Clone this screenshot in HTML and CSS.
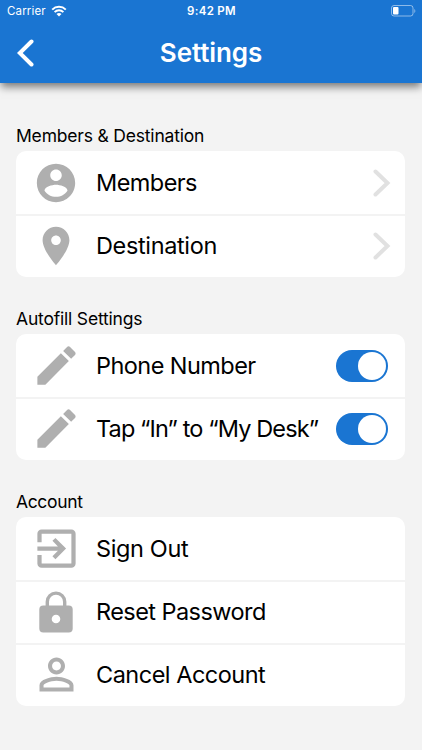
FILE: index.html
```html
<!DOCTYPE html>
<html lang="en">
<head>
  <meta charset="UTF-8">
  <title>Settings</title>
  <meta name="viewport" content="width=device-width, initial-scale=1.0">
  <link rel="stylesheet" href="styles.css">
</head>
<body>

<header class="header">
  <!-- Status bar -->
  <div class="status-bar">
    <div class="carrier">
      <span>Carrier</span>
      <svg class="wifi" viewBox="0 0 16 12">
        <path d="M1.2 4.6C5 .9 11 .9 14.8 4.6M3.6 7.1c2.5-2.4 6.3-2.4 8.8 0" fill="none" stroke="#fff" stroke-width="2"/>
        <path d="M8 11.6L5.5 9c1.4-1.3 3.6-1.3 5 0z" fill="#fff"/>
      </svg>
    </div>
    <div class="time">9:42 PM</div>
    <svg class="battery" viewBox="0 0 25 12">
      <rect x=".5" y=".5" width="21.5" height="10.5" rx="2.5" fill="none" stroke="#fff" stroke-opacity=".5"/>
      <rect x="2" y="2" width="5.5" height="7.5" rx="1" fill="#fff"/>
      <path d="M23.3 4v4c1.4-.6 1.4-3.400 0-4z" fill="#fff" fill-opacity=".5"/>
    </svg>
  </div>

  <div class="nav-bar">
    <svg class="back" viewBox="0 0 18 28">
      <path d="M14.500 2.500L2.800 14l11.700 11.500" fill="none" stroke="#fff" stroke-width="4" stroke-linecap="round"/>
    </svg>
    <h1>Settings</h1>
  </div>
</header>

<main class="content">
  <section>
    <h2>Members &amp; Destination</h2>
    <div class="card">
      <div class="row">
        <svg class="icon" viewBox="0 0 24 24"><path d="M12 2C6.480 2 2 6.480 2 12s4.480 10 10 10 10-4.480 10-10S17.520 2 12 2zm0 3c1.660 0 3 1.340 3 3s-1.340 3-3 3-3-1.340-3-3 1.340-3 3-3zm0 14.200c-2.500 0-4.710-1.280-6-3.220.030-1.990 4-3.080 6-3.080 1.990 0 5.970 1.090 6 3.080-1.290 1.940-3.500 3.220-6 3.220z"/></svg>
        <span class="name members">Members</span>
        <svg class="chevron" viewBox="0 0 18 28"><path d="M2.500 2.500L14.500 14l-12 11.500"/></svg>
      </div>
      <div class="row">
        <svg class="icon" viewBox="0 0 24 24"><path d="M12 2C8.130 2 5 5.130 5 9c0 5.250 7 13 7 13s7-7.750 7-13c0-3.870-3.130-7-7-7zm0 9.500c-1.380 0-2.500-1.120-2.500-2.500s1.120-2.500 2.500-2.500 2.500 1.120 2.500 2.500-1.120 2.500-2.500 2.500z"/></svg>
        <span class="name destination">Destination</span>
        <svg class="chevron" viewBox="0 0 18 28"><path d="M2.500 2.500L14.500 14l-12 11.500"/></svg>
      </div>
    </div>
  </section>

  <section>
    <h2>Autofill Settings</h2>
    <div class="card">
      <div class="row">
        <svg class="icon large" viewBox="0 0 24 24"><path d="M3 17.250V21h3.750L17.810 9.940l-3.750-3.750L3 17.250zM20.710 7.040c.390-.390.390-1.020 0-1.410l-2.340-2.340c-.390-.390-1.020-.390-1.410 0l-1.830 1.830 3.750 3.750 1.830-1.830z"/></svg>
        <span class="name">Phone Number</span>
        <span class="toggle"></span>
      </div>
      <div class="row">
        <svg class="icon large" viewBox="0 0 24 24"><path d="M3 17.250V21h3.750L17.810 9.940l-3.750-3.750L3 17.250zM20.710 7.040c.390-.390.390-1.020 0-1.410l-2.340-2.340c-.390-.390-1.020-.390-1.410 0l-1.830 1.830 3.750 3.750 1.830-1.830z"/></svg>
        <span class="name desk">Tap “In” to “My Desk”</span>
        <span class="toggle"></span>
      </div>
    </div>
  </section>

  <section>
    <h2 class="account">Account</h2>
    <div class="card">
      <div class="row">
        <svg class="icon large" viewBox="0 0 24 24"><path d="M10.090 15.590L11.500 17l5-5-5-5-1.410 1.410L12.670 11H3v2h9.670l-2.580 2.590zM19 3H5c-1.110 0-2 .900-2 2v4h2V5h14v14H5v-4H3v4c0 1.100.890 2 2 2h14c1.100 0 2-.900 2-2V5c0-1.100-.900-2-2-2z"/></svg>
        <span class="name signout">Sign Out</span>
      </div>
      <div class="row">
        <svg class="icon" viewBox="0 0 46 46">
          <path d="M14.300 18v-5.200a8.700 8.700 0 0 1 17.400 0V18" fill="none" stroke="#afafaf" stroke-width="3.400"/>
          <path fill-rule="evenodd" d="M10.300 16.500h25.400a4 4 0 0 1 4 4v19a4 4 0 0 1-4 4H10.300a4 4 0 0 1-4-4v-19a4 4 0 0 1 4-4zM23 25.700a4.300 4.300 0 1 0 0 8.600 4.300 4.300 0 0 0 0-8.600z"/>
        </svg>
        <span class="name">Reset Password</span>
      </div>
      <div class="row">
        <svg class="icon large" viewBox="0 0 24 24"><path d="M12 5.900c1.160 0 2.100.940 2.100 2.100s-.940 2.100-2.100 2.100S9.900 9.160 9.900 8s.940-2.100 2.100-2.100m0 9c2.970 0 6.100 1.460 6.100 2.100v1.100H5.900V17c0-.640 3.130-2.100 6.100-2.100M12 4C9.790 4 8 5.790 8 8s1.790 4 4 4 4-1.790 4-4-1.790-4-4-4zm0 9c-2.670 0-8 1.340-8 4v3h16v-3c0-2.660-5.330-4-8-4z"/></svg>
        <span class="name cancel">Cancel Account</span>
      </div>
    </div>
  </section>
</main>

</body>
</html>
```
FILE: styles.css
```css
* { box-sizing: border-box; margin: 0; padding: 0; }

body {
  font-family: Inter, "Liberation Sans", sans-serif;
  background: #f3f3f3;
  color: #000;
  min-height: 100vh;
  overflow: hidden;
}

svg {
  display: block;
  flex: none;
}

/* Header */
.header {
  height: 83px;
  background: #1a75d2;
  color: #fff;
  box-shadow: 0 5px 8px -1px rgba(0, 0, 0, 0.5);
}

.status-bar {
  display: grid;
  grid-template-columns: 1fr auto 1fr;
  align-items: center;
  height: 22px;
  padding: 0 6px 0 7px;
  font-size: 11.5px;
}

.carrier {
  display: flex;
  align-items: center;
  gap: 5px;
  letter-spacing: 0.15px;
}

.wifi {
  width: 16px;
  height: 12px;
}

.time {
  font-weight: 600;
  letter-spacing: 0.3px;
}

.battery {
  width: 25px;
  height: 12px;
  justify-self: end;
}

.nav-bar {
  display: grid;
  grid-template-columns: 60px 1fr 60px;
  align-items: center;
  height: 61px;
}

.back {
  width: 18px;
  height: 28px;
  margin-left: 17px;
}

h1 {
  font-size: 26px;
  font-weight: 600;
  line-height: 32px;
  letter-spacing: -0.1px;
  text-align: center;
}

/* Groups */
.content {
  padding: 42px 17px 0 16px;
}

section {
  margin-bottom: 31px;
}

h2 {
  height: 26px;
  font-size: 17.5px;
  font-weight: 400;
  line-height: 22px;
  letter-spacing: -0.19px;
  white-space: nowrap;
}

h2.account {
  letter-spacing: -0.35px;
}

.card {
  background: #fff;
  border-radius: 10px;
}

.row {
  display: flex;
  align-items: center;
  height: 63px;
  padding: 0 14.5px 0 17px;
}

/* Divider drawn inside the row, so it doesn't push the content down */
.row + .row {
  box-shadow: inset 0 2px #f3f3f3;
}

.icon {
  width: 46px;
  height: 46px;
  fill: #afafaf;
}

.icon.large {
  width: 51px;
  height: 51px;
  margin: 0 -2.5px;
}

.name {
  flex: 1;
  min-width: 0;
  margin-left: 17px;
  font-size: 23.5px;
  line-height: 30px;
  letter-spacing: -0.56px;
  white-space: nowrap;
}

.name.destination,
.name.signout {
  letter-spacing: -0.36px;
}

.name.cancel {
  letter-spacing: -0.5px;
}

.name.desk {
  letter-spacing: -0.88px;
}

.chevron {
  width: 18px;
  height: 28px;
  fill: none;
  stroke: #e1e1e1;
  stroke-width: 4;
  stroke-linecap: round;
}

.toggle {
  flex: none;
  width: 52px;
  height: 32px;
  margin-right: 3px;
  padding: 2px;
  border-radius: 16px;
  background: #1a75d2;
}

.toggle::after {
  content: "";
  display: block;
  width: 28px;
  height: 28px;
  margin-left: auto;
  border-radius: 50%;
  background: #fff;
}
```
